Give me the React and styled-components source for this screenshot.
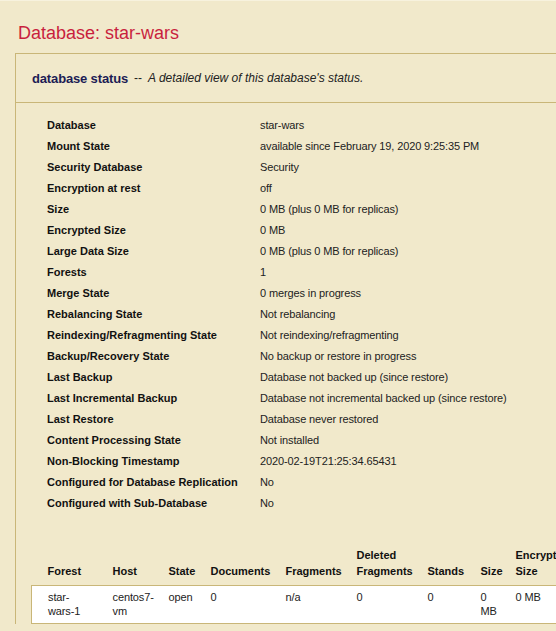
import styled, { createGlobalStyle } from "styled-components";

const GlobalStyle = createGlobalStyle`
  html, body {
    margin: 0;
    padding: 0;
    background: #f1e9cb;
  }
  body {
    font-family: "Liberation Sans", Arial, sans-serif;
    color: #222;
    overflow: hidden;
  }
`;

const status = [
  ["Database", "star-wars"],
  ["Mount State", "available since February 19, 2020 9:25:35 PM"],
  ["Security Database", "Security"],
  ["Encryption at rest", "off"],
  ["Size", "0 MB (plus 0 MB for replicas)"],
  ["Encrypted Size", "0 MB"],
  ["Large Data Size", "0 MB (plus 0 MB for replicas)"],
  ["Forests", "1"],
  ["Merge State", "0 merges in progress"],
  ["Rebalancing State", "Not rebalancing"],
  ["Reindexing/Refragmenting State", "Not reindexing/refragmenting"],
  ["Backup/Recovery State", "No backup or restore in progress"],
  ["Last Backup", "Database not backed up (since restore)"],
  ["Last Incremental Backup", "Database not incremental backed up (since restore)"],
  ["Last Restore", "Database never restored"],
  ["Content Processing State", "Not installed"],
  ["Non-Blocking Timestamp", "2020-02-19T21:25:34.65431"],
  ["Configured for Database Replication", "No"],
  ["Configured with Sub-Database", "No"],
];

const forestCols = [
  { title: "Forest", width: 66 },
  { title: "Host", width: 56 },
  { title: "State", width: 42 },
  { title: "Documents", width: 75 },
  { title: "Fragments", width: 71 },
  { title: "Deleted Fragments", width: 71 },
  { title: "Stands", width: 53 },
  { title: "Size", width: 35 },
  { title: "Encrypted Size", width: 80 },
];

const forestRow = ["star-wars-1", "centos7-vm", "open", "0", "n/a", "0", "0", "0 MB", "0 MB"];

export default function App() {
  return (
    <>
      <GlobalStyle />
      <Page>
        <Title>Database: star-wars</Title>
        <Panel>
          <PanelHeader>
            <strong>database status</strong>
            <Sep>--</Sep>
            <em>A detailed view of this database's status.</em>
          </PanelHeader>
          <PanelBody>
            <StatusTable>
              <tbody>
                {status.map(([label, value]) => (
                  <tr key={label}>
                    <th>{label}</th>
                    <td>{value}</td>
                  </tr>
                ))}
              </tbody>
            </StatusTable>
            <ForestTable>
              <colgroup>
                {forestCols.map((c) => (
                  <col key={c.title} style={{ width: c.width }} />
                ))}
              </colgroup>
              <thead>
                <tr>
                  {forestCols.map((c) => (
                    <th key={c.title}>{c.title}</th>
                  ))}
                </tr>
              </thead>
              <tbody>
                <tr>
                  {forestRow.map((v, i) => (
                    <td key={i}>{v}</td>
                  ))}
                </tr>
              </tbody>
            </ForestTable>
          </PanelBody>
        </Panel>
      </Page>
    </>
  );
}

const Page = styled.div`
  padding: 1px 0 0 15px;
  border-top: 1px solid #f7f2de;
`;

const Title = styled.h1`
  margin: 20px 0 0 3px;
  height: 31px;
  font-size: 18px;
  font-weight: 400;
  line-height: 23px;
  color: #c91f3e;
`;

const Panel = styled.div`
  width: 600px;
  border: 1px solid #c9b678;
  border-right: none;
  border-bottom: none;
`;

const PanelHeader = styled.div`
  height: 48px;
  display: flex;
  align-items: center;
  padding-left: 16px;
  font-size: 12px;
  border-bottom: 1px solid #c9b678;

  strong {
    font-size: 13px;
    color: #1c1c55;
    letter-spacing: -0.15px;
  }

  em {
    color: #222;
  }
`;

const Sep = styled.span`
  margin: 0 6px;
`;

const PanelBody = styled.div`
  padding: 11px 0 0 15px;
`;

const StatusTable = styled.table`
  border-collapse: collapse;
  font-size: 11px;

  th {
    text-align: left;
    font-weight: 700;
    color: #111;
    padding: 0 0 0 16px;
    width: 213px;
    height: 21px;
  }

  td {
    padding: 0;
    color: #222;
    height: 21px;
    letter-spacing: -0.12px;
  }
`;

const ForestTable = styled.table`
  margin-top: 34px;
  border-collapse: collapse;
  table-layout: fixed;
  width: 549px;
  font-size: 11px;
  line-height: 14px;

  th {
    text-align: left;
    vertical-align: bottom;
    font-weight: 700;
    color: #111;
    line-height: 16px;
    padding: 0 8px 6px 15px;
  }

  th:first-child,
  td:first-child {
    padding-left: 16px;
  }

  tbody tr {
    background: #fff;
    border: 1px solid #c9b678;
  }

  td {
    vertical-align: top;
    padding: 4px 8px 5px 15px;
    color: #222;
    letter-spacing: -0.12px;
  }
`;
